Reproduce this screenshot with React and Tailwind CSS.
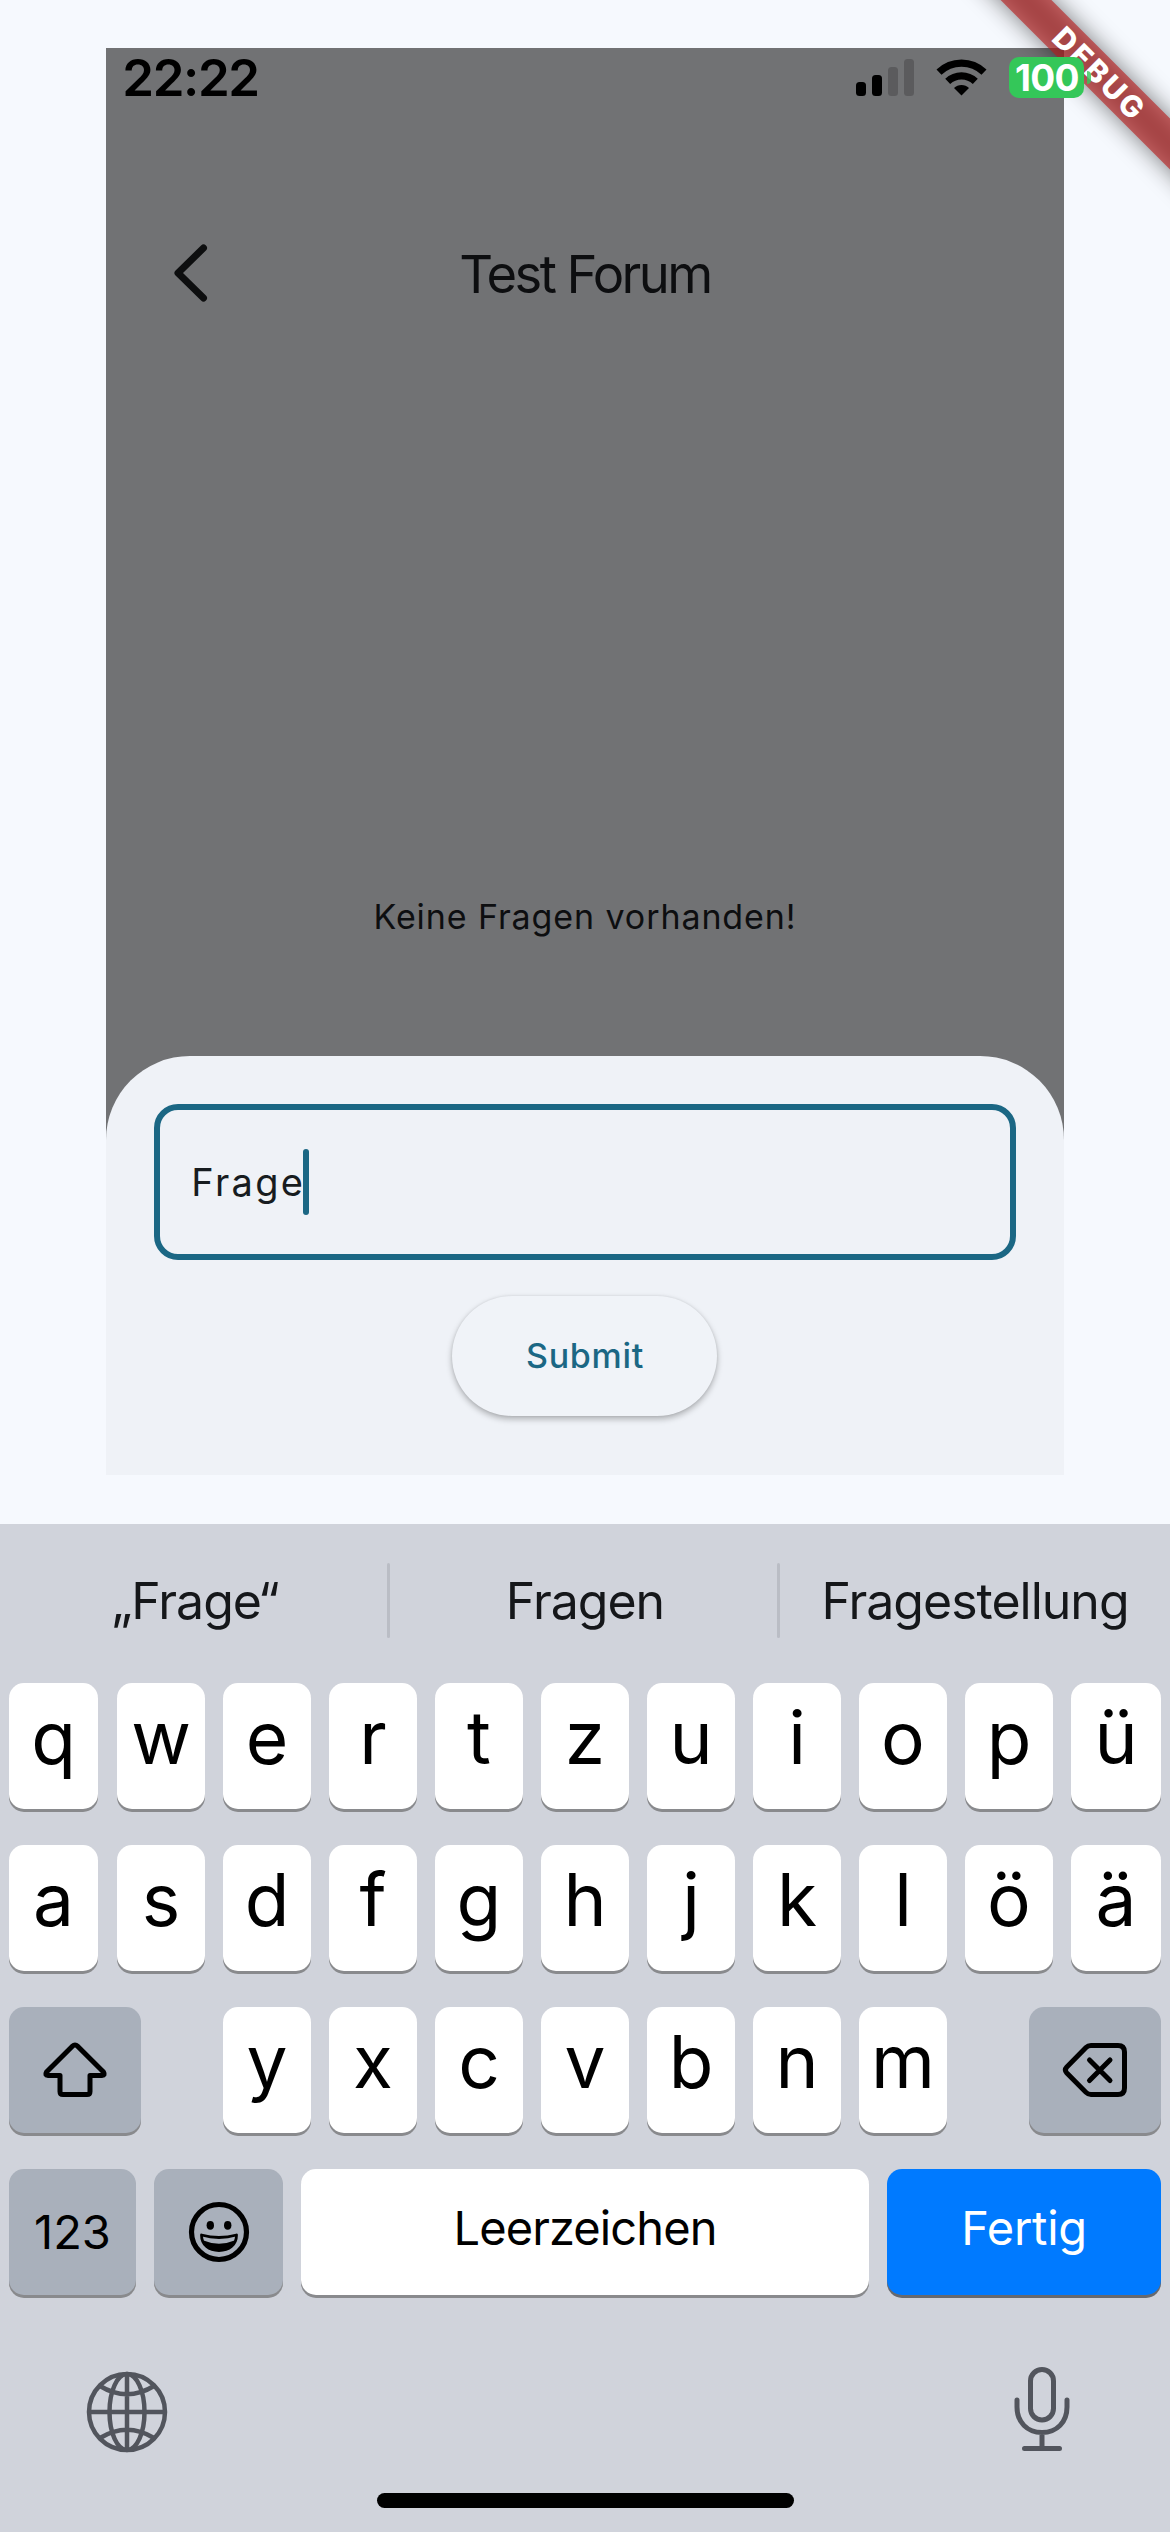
const rowOne = ['q', 'w', 'e', 'r', 't', 'z', 'u', 'i', 'o', 'p', 'ü'];
const rowTwo = ['a', 's', 'd', 'f', 'g', 'h', 'j', 'k', 'l', 'ö', 'ä'];
const rowThree = ['y', 'x', 'c', 'v', 'b', 'n', 'm'];

function LetterKey({ children, className = '' }) {
  return (
    <div className={`flex h-[126px] items-center justify-center rounded-[15px] bg-white pb-[17px] text-[73px] leading-none font-[380] text-black shadow-[0_3px_0_#898a8d] ${className}`}>
      {children}
    </div>
  );
}

function GreyKey({ children, className }) {
  return (
    <div className={`flex h-[126px] items-center justify-center rounded-[15px] bg-[#a9b0bb] text-black shadow-[0_3px_0_#898a8d] ${className}`}>
      {children}
    </div>
  );
}

function LetterRow({ letters }) {
  return (
    <div className="grid grid-cols-[90px_repeat(9,88px)_90px] gap-x-[18px]">
      {letters.map((l, i) => (
        <LetterKey key={l} className={i === 0 ? 'mr-px' : ''}>{l}</LetterKey>
      ))}
    </div>
  );
}

function StatusBar() {
  return (
    <div className="relative z-20 flex h-[57px] w-[985px] items-start">
      <span className="ml-[16px] mt-[4px] text-[51px] leading-[51px] font-semibold tracking-[-1.4px] text-black">22:22</span>
      <svg className="ml-auto mt-[11px] shrink-0" width="58" height="37" viewBox="0 0 58 37">
        <rect x="0" y="23" width="10" height="14" rx="3.5" />
        <rect x="16" y="16" width="10" height="21" rx="3.5" />
        <rect x="32" y="8" width="10" height="29" rx="3.5" fill="#5b5b5d" />
        <rect x="48" y="0" width="10" height="37" rx="3.5" fill="#5b5b5d" />
      </svg>
      <svg className="ml-[22px] mt-[11px] shrink-0" width="51" height="37" viewBox="0 0 51 37" fill="none" stroke="#000">
        <path d="M3 13.2A32.5 32.5 0 0 1 48 13.2" strokeWidth="7.2" />
        <path d="M11.7 22.3A20 20 0 0 1 39.3 22.3" strokeWidth="7.2" />
        <path d="M25.5 36.5L18 29.1A10.6 10.6 0 0 1 33 29.1Z" fill="#000" stroke="none" />
      </svg>
      <div className="ml-[22px] mt-[9px] flex shrink-0 items-center">
        <div className="flex h-[41px] w-[75px] items-center justify-center rounded-[10px] bg-[#34c759] text-[37px] leading-none font-bold tracking-[-0.8px] text-white">100</div>
        <div className="ml-[3px] h-[13px] w-[4px] rounded-r-full bg-[#34c759]/80" />
      </div>
    </div>
  );
}

export default function App() {
  return (
    <div className="relative flex h-[2532px] w-[1170px] flex-col overflow-hidden bg-[#f6f9fe] font-['Inter',sans-serif]">
      <div className="pointer-events-none absolute top-0 right-0 z-10 h-[260px] w-[260px] overflow-hidden">
        <div className="absolute top-[54px] left-[8px] h-[36px] w-[360px] rotate-45 bg-black/50 blur-[12px]" />
        <div className="absolute top-[54px] left-[8px] flex h-[36px] w-[360px] rotate-45 items-center justify-center bg-[#b71c1c]/63 pl-[5px] text-[30px] leading-none font-extrabold tracking-[2.8px] text-white">
          DEBUG
        </div>
      </div>

      <div className="mx-auto mt-[48px] flex h-[1427px] w-[957.3px] flex-col bg-[#717274]">
        <StatusBar />
        <header className="mt-[109px] grid h-[120px] grid-cols-[1fr_auto_1fr] items-center">
          <svg className="ml-[65px] -mt-[2px]" width="40" height="60" viewBox="0 0 40 60" fill="none" stroke="#0d0e0f" strokeWidth="7" strokeLinecap="round" strokeLinejoin="round">
            <path d="M32.500 5L7 30L32.500 55" />
          </svg>
          <h1 className="text-[52.5px] leading-none tracking-[-2.6px] text-[#0d0e10]">Test Forum</h1>
        </header>
        <p className="mt-[559px] text-center text-[34px] leading-[48px] tracking-[0.9px] text-[#0d0e10]">Keine Fragen vorhanden!</p>
        <section className="mt-auto flex h-[419px] flex-col items-center rounded-t-[84px] bg-[#eff2f7] px-[48px] pt-[48px]">
          <div className="flex h-[156px] w-full items-center rounded-[24px] border-[6px] border-[#1b6784] pl-[31px]">
            <span className="text-[38px] leading-none font-[380] tracking-[2.3px] text-[#171c20]">Frage</span>
            <span className="-ml-[2px] h-[66px] w-[6px] rounded-full bg-[#1b6784]" />
          </div>
          <button className="mt-[36px] flex h-[120px] w-[265px] items-center justify-center rounded-full bg-[#f0f3f8] text-[34px] leading-none font-medium tracking-[0.7px] text-[#1b6784] shadow-[0_3px_6px_rgba(0,0,0,0.28),0_0_3px_rgba(0,0,0,0.08)]">
            Submit
          </button>
        </section>
      </div>

      <div className="mt-[49px] flex h-[1008px] flex-col bg-[#d0d3db] px-[9px]">
        <div className="-mx-[9px] grid h-[159px] grid-cols-[387px_3px_387px_3px_390px] items-center pb-[6px] text-center text-[50px] leading-none tracking-[-1px] text-[#15171a]">
          <span className="pl-[3px]">„Frage“</span>
          <span className="h-[75px] rounded-full bg-[#babdc5]" />
          <span className="pl-[3px]">Fragen</span>
          <span className="h-[75px] rounded-full bg-[#babdc5]" />
          <span>Fragestellung</span>
        </div>
        <div className="flex flex-col gap-[36px]">
          <LetterRow letters={rowOne} />
          <LetterRow letters={rowTwo} />
          <div className="flex justify-between">
            <GreyKey className="w-[132px]">
              <svg width="66" height="58" viewBox="0 0 66 58" fill="none" stroke="#000" strokeWidth="5" strokeLinejoin="round">
                <path d="M33 4Q34.300 4 35.400 5.100L61.500 31Q63.500 34.500 60 34.500H48V50.500Q48 53.500 45 53.500H21Q18 53.500 18 50.500V34.500H6Q2.500 34.500 4.500 31L30.600 5.100Q31.700 4 33 4Z" />
              </svg>
            </GreyKey>
            <div className="flex gap-[18px]">
              {rowThree.map((l) => (
                <LetterKey key={l} className="w-[88px]">{l}</LetterKey>
              ))}
            </div>
            <GreyKey className="w-[132px]">
              <svg width="66" height="56" viewBox="0 0 66 56" fill="none" stroke="#000" strokeWidth="5" strokeLinecap="round" strokeLinejoin="round">
                <path d="M29 3.500H56Q62.500 3.500 62.500 10V46Q62.500 52.500 56 52.500H29Q26 52.500 24 50.400L4.800 31Q2 28 4.800 25L24 5.600Q26 3.500 29 3.500Z" />
                <path d="M27.500 18L48 38.500M48 18L27.500 38.500" />
              </svg>
            </GreyKey>
          </div>
          <div className="flex gap-[18px] text-[47px] leading-none">
            <GreyKey className="w-[127px] pb-[2px]">123</GreyKey>
            <GreyKey className="w-[129px]">
              <svg width="62" height="62" viewBox="0 0 62 62">
                <circle cx="31" cy="31" r="27.500" fill="none" stroke="#000" strokeWidth="5.200" />
                <ellipse cx="22.300" cy="24.300" rx="3.700" ry="4.400" />
                <ellipse cx="39.700" cy="24.300" rx="3.700" ry="4.400" />
                <path d="M13.500 34Q31 39 48.500 34C48.500 44 41 49.500 31 49.500S13.500 44 13.500 34Z" fill="none" stroke="#000" strokeWidth="2.800" strokeLinejoin="round" />
                <path d="M15.500 39.500Q31 46 46.500 39.500C45 47 38.500 50 31 50S17 47 15.500 39.500Z" />
              </svg>
            </GreyKey>
            <div className="flex h-[126px] w-[568px] items-center justify-center rounded-[15px] bg-white pb-[9px] tracking-[-0.9px] shadow-[0_3px_0_#898a8d]">Leerzeichen</div>
            <div className="flex h-[126px] w-[274px] items-center justify-center rounded-[15px] bg-[#007aff] pb-[9px] tracking-[-0.3px] text-white shadow-[0_3px_0_#66696f]">Fertig</div>
          </div>
        </div>
        <div className="mt-[71px] flex h-[92px] items-center justify-between pr-[88px] pl-[77px]">
          <svg width="82" height="82" viewBox="0 0 82 82" fill="none" stroke="#52555d" strokeWidth="4.500">
            <circle cx="41" cy="41" r="38" />
            <ellipse cx="41" cy="41" rx="17.500" ry="38" />
            <path d="M41 3V79M3 41H79M14 15Q41 31.500 68 15M14 67Q41 50.500 68 67" />
          </svg>
          <svg width="60" height="90" viewBox="0 0 60 90" fill="none" stroke="#52555d" strokeWidth="5" strokeLinecap="round">
            <rect x="17.500" y="2.500" width="23" height="50.500" rx="11.500" />
            <path d="M4 33V40C4 55 14 65.500 29 65.500S54 55 54 40V33M29 65.500V81M11.500 81.500H46.500" />
          </svg>
        </div>
        <div className="mx-auto mt-[35px] h-[15px] w-[417px] rounded-full bg-black" />
      </div>
    </div>
  );
}
